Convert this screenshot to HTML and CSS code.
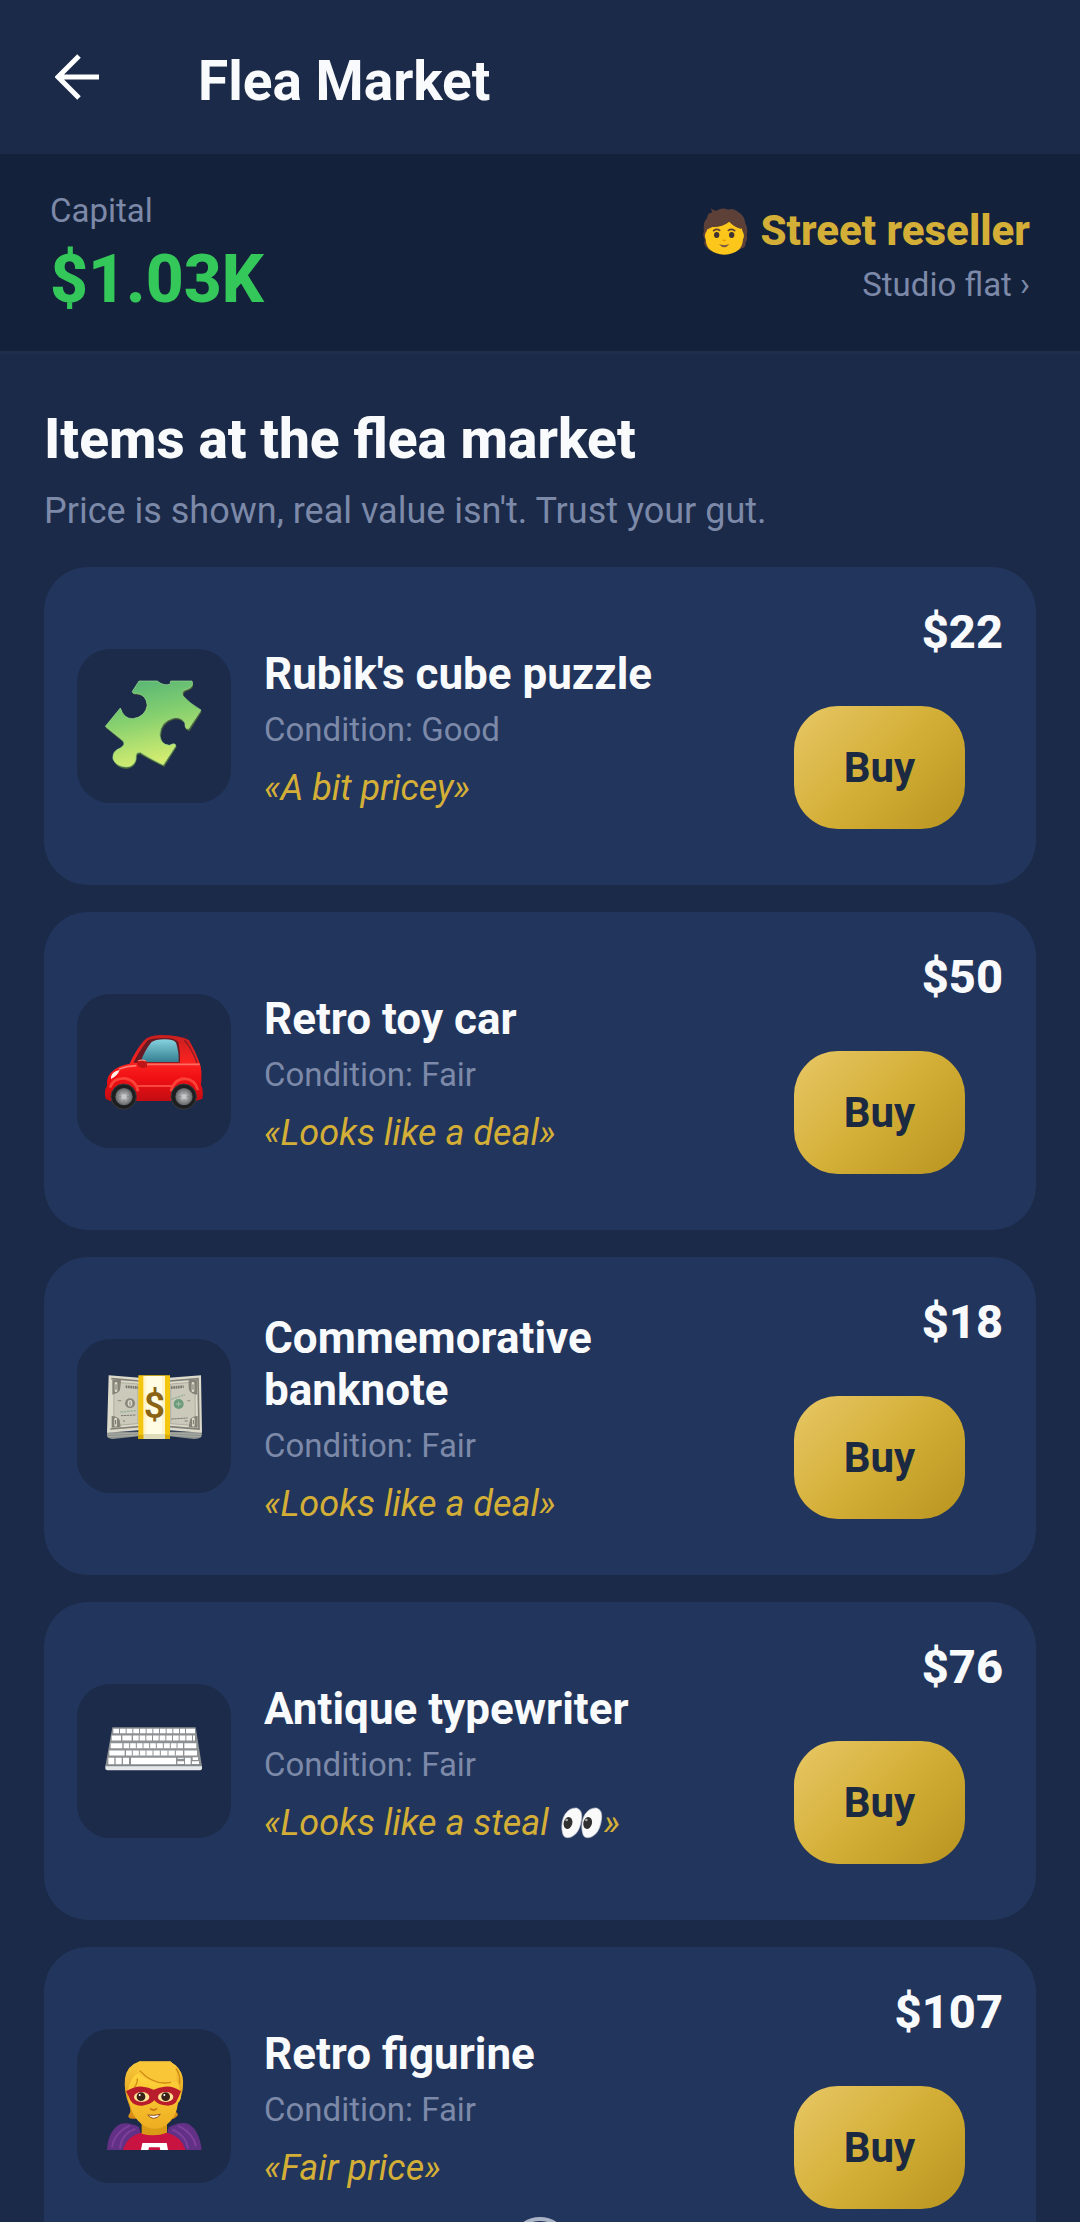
FILE: index.html
```html
<!DOCTYPE html>
<html lang="en">
<head>
    <meta charset="UTF-8">
    <meta name="viewport" content="width=device-width, initial-scale=1.0">
    <title>Flea Market</title>
    <link rel="stylesheet" href="styles.css">
</head>
<body>
    <!-- Top bar -->
    <header class="topbar">
        <button type="button" class="back" aria-label="Back">
            <svg viewBox="0 0 44 46" aria-hidden="true">
                <path d="M44 23H4M24 2L3 23L24 44" fill="none" stroke="#fff" stroke-width="5"/>
            </svg>
        </button>
        <h1>Flea Market</h1>
    </header>

    <!-- Capital and status -->
    <section class="status">
        <div class="capital">
            <p class="label">Capital</p>
            <p class="amount">$1.03K</p>
        </div>
        <div class="rank">
            <p class="rank-name">
                <svg class="avatar" viewBox="66 50 138 144" aria-hidden="true">
                    <path d="M80 172Q68 162 75 149Q66 137 72 122Q68 96 81 84Q82 68 97 66L92 54Q101 62 110 61Q126 49 145 58Q160 52 176 66Q193 76 196 99Q205 114 200 135Q204 149 196 157Q199 170 186 174Q176 182 161 182H104Q87 182 80 172Z" fill="#5d4037"/>
                    <path d="M80 122Q82 111 96 109Q126 106 148 92Q158 106 180 109Q187 114 188 124Q195 135 189 147Q187 191 133 193Q79 191 77 147Q71 135 80 122Z" fill="#fcc61b"/>
                    <path d="M84 116Q79 90 104 84Q140 74 160 90Q181 92 184 116Q159 108 148 94Q127 111 97 110Z" fill="#5d4037"/>
                    <path d="M101 121Q110 114 119 120M145 120Q154 114 164 121" fill="none" stroke="#5d4037" stroke-width="5" stroke-linecap="round"/>
                    <ellipse cx="110" cy="134" rx="8" ry="9" fill="#403335"/>
                    <ellipse cx="155" cy="134" rx="8" ry="9" fill="#403335"/>
                    <path d="M126 149Q133 146 139 149Q133 156 126 149Z" fill="#e59500"/>
                    <path d="M117 162Q132 167 148 162Q133 180 117 162Z" fill="#795548"/>
                </svg>
                Street reseller
            </p>
            <a href="#" class="home-link">Studio flat ›</a>
        </div>
    </section>

    <main class="market">
        <h2>Items at the flea market</h2>
        <p class="hint">Price is shown, real value isn't. Trust your gut.</p>

        <ul class="items">
            <li class="item">
                <svg class="thumb" viewBox="52 54 462 462" aria-hidden="true">
                    <defs>
                        <linearGradient id="green" x1="0" y1="0" x2="0.25" y2="1">
                            <stop offset="0" stop-color="#51b276"/>
                            <stop offset="0.5" stop-color="#86d06f"/>
                            <stop offset="1" stop-color="#d2ec70"/>
                        </linearGradient>
                    </defs>
                    <path d="M238 154H296Q312 170 332 164L334 154H398Q406 170 388 178Q366 184 374 197Q394 221 426 242L390 300Q372 298 377 279Q365 263 345 265Q305 277 304 317Q308 343 331 343Q349 333 351 348L314 408Q268 386 242 370Q230 367 231 386Q226 412 200 414Q170 411 162 389Q160 365 183 356Q199 345 189 332L138 290L184 233Q194 267 219 266Q253 259 261 225Q261 190 230 191Q218 190 220 182Z" fill="#4c6539"/>
                    <path d="M238 150H293Q310 165 331 160L333 150H397Q403 165 386 173Q362 179 369 194Q391 218 424 237L387 293Q375 296 376 276Q365 257 343 260Q301 271 300 312Q302 341 329 343Q348 333 348 345L311 402Q267 381 242 364Q226 363 229 383Q224 408 199 408Q169 406 160 384Q157 360 182 351Q199 341 190 329L137 286L182 231Q192 264 220 263Q258 257 263 223Q260 191 231 187Q217 189 218 181Z" fill="url(#green)" stroke="#9de092" stroke-width="2"/>
                </svg>
                <div class="info">
                    <h3>Rubik's cube puzzle</h3>
                    <p class="condition">Condition: Good</p>
                    <p class="quote">«A bit pricey»</p>
                </div>
                <div class="deal">
                    <p class="price">$22</p>
                    <button type="button" class="buy">Buy</button>
                </div>
            </li>

            <li class="item">
                <svg class="thumb" viewBox="52 42 462 462" aria-hidden="true">
                    <defs>
                        <linearGradient id="red" x1="0" y1="0" x2="0" y2="1">
                            <stop offset="0" stop-color="#c81e1f"/>
                            <stop offset="0.42" stop-color="#fb2320"/>
                            <stop offset="0.65" stop-color="#f01014"/>
                            <stop offset="1" stop-color="#c40d12"/>
                        </linearGradient>
                        <linearGradient id="glass" x1="0" y1="0" x2="0" y2="1">
                            <stop offset="0" stop-color="#87d2df"/>
                            <stop offset="1" stop-color="#347f91"/>
                        </linearGradient>
                        <radialGradient id="hub">
                            <stop offset="0" stop-color="#c8c9ca"/>
                            <stop offset="0.5" stop-color="#999b9c"/>
                            <stop offset="1" stop-color="#5f6264"/>
                        </radialGradient>
                    </defs>
                    <path d="M376 175L381 164" stroke="#5b1a25" stroke-width="3"/>
                    <path d="M138 356Q132 333 142 318Q138 287 164 269Q181 256 210 251Q230 207 254 181Q268 166 302 165Q358 165 388 180Q407 212 421 252Q428 268 424 315Q433 333 428 356L409 363H151Z" fill="url(#red)"/>
                    <path d="M221 248Q247 199 265 181Q279 174 313 174Q348 174 356 187Q363 217 361 248Z" fill="#671a24"/>
                    <path d="M243 246Q253 215 275 187Q286 178 315 178Q341 178 349 188Q358 213 357 246Z" fill="url(#glass)"/>
                    <path d="M374 181Q396 204 412 249" fill="none" stroke="#891d25" stroke-width="4"/>
                    <path d="M260 253H420" stroke="#ff6d61" stroke-width="5"/>
                    <path d="M178 267Q201 258 230 257" fill="none" stroke="#ff7b71" stroke-width="5"/>
                    <path d="M232 318H337" stroke="#ff5a4e" stroke-width="5"/>
                    <path d="M232 242Q253 236 262 246V262Q237 268 233 253Z" fill="#c01517"/>
                    <path d="M236 242Q249 238 259 243" stroke="#ff8076" stroke-width="4" fill="none"/>
                    <path d="M154 297Q153 275 180 270Q174 287 154 297Z" fill="#fff0ec"/>
                    <path d="M151 323Q160 294 194 295Q229 299 235 334M334 334Q343 298 374 296Q406 298 415 330" fill="none" stroke="#fb4239" stroke-width="8"/>
                    <circle cx="192" cy="350" r="38" fill="#1d1e20" stroke="#393c40" stroke-width="3"/>
                    <circle cx="372" cy="350" r="38" fill="#1d1e20" stroke="#393c40" stroke-width="3"/>
                    <circle cx="193" cy="350" r="26" fill="url(#hub)"/>
                    <circle cx="373" cy="350" r="26" fill="url(#hub)"/>
                    <path d="M193 326V374M169 350H217M373 326V374M349 350H397" stroke="#7d7e80" stroke-width="2"/>
                    <circle cx="193" cy="350" r="8" fill="#c5c6c7"/>
                    <circle cx="373" cy="350" r="8" fill="#c5c6c7"/>
                </svg>
                <div class="info">
                    <h3>Retro toy car</h3>
                    <p class="condition">Condition: Fair</p>
                    <p class="quote">«Looks like a deal»</p>
                </div>
                <div class="deal">
                    <p class="price">$50</p>
                    <button type="button" class="buy">Buy</button>
                </div>
            </li>

            <li class="item">
                <svg class="thumb" viewBox="52 26 462 462" aria-hidden="true">
                    <path d="M142 304H426V318Q420 326 403 326L330 318H237L159 326Q140 324 142 313Z" fill="#8f938e"/>
                    <path d="M142 312L237 308M330 308L427 312M145 319L237 314M330 314L424 319" stroke="#b7b9b2" stroke-width="2"/>
                    <path d="M147 135L240 142H328L424 135L427 307L330 300H237L142 307Z" fill="#dcdacb"/>
                    <path d="M155 145L239 152M329 152L415 145L418 296L330 289M237 289L152 296Z" fill="none" stroke="#817f76" stroke-width="5"/>
                    <path d="M163 155L235 161V280L162 286ZM333 161L406 155L407 286L333 280Z" fill="#cbc9b9" stroke="#9e9b8e" stroke-width="2"/>
                    <path d="M158 149H184Q182 176 180 181Q172 191 158 193ZM412 149H387Q386 175 389 181Q397 191 412 193ZM156 292V257Q174 258 180 269L183 291ZM414 292V257Q396 258 391 269L387 291Z" fill="#858277"/>
                    <path d="M169 159V181M400 159V181M168 266V285M401 266V285" stroke="#dcdacb" stroke-width="8" stroke-linecap="round"/>
                    <path d="M169 162V178M400 162V178M168 269V282M401 269V282" stroke="#706d64" stroke-width="3"/>
                    <path d="M198 169L235 172M334 172L372 169" stroke="#77756c" stroke-width="8" stroke-dasharray="5 2"/>
                    <circle cx="211" cy="219" r="15" fill="#88877d"/>
                    <ellipse cx="211" cy="219" rx="7" ry="10" fill="#dddacd"/>
                    <path d="M211 213V226" stroke="#817e74" stroke-width="3"/>
                    <circle cx="357" cy="221" r="15" fill="#6d9c7c"/>
                    <path d="M349 221H365M357 214V228" stroke="#a9c2a5" stroke-width="3"/>
                    <path d="M182 245L230 241M335 207L376 193" stroke="#9bb29b" stroke-width="4" stroke-dasharray="8 2"/>
                    <path d="M184 256L228 254M335 266L384 263" stroke="#777870" stroke-width="3" stroke-dasharray="7 2"/>
                    <path d="M174 211H185M190 272H196M383 211H392M375 272H384" stroke="#99958a" stroke-width="4"/>
                    <path d="M236 135H331V326H236Z" fill="#f5c60f"/>
                    <path d="M251 137H316V311H251Z" fill="#fff4c8"/>
                    <path d="M260 137H307V311H260Z" fill="#fffce3"/>
                    <path d="M251 311H316V326H251Z" fill="#dedbbb"/>
                    <path d="M236 313H251V326H236ZM316 313H331V326H316Z" fill="#d6ab08"/>
                    <text x="284" y="263" class="bill-sign">$</text>
                </svg>
                <div class="info">
                    <h3>Commemorative banknote</h3>
                    <p class="condition">Condition: Fair</p>
                    <p class="quote">«Looks like a deal»</p>
                </div>
                <div class="deal">
                    <p class="price">$18</p>
                    <button type="button" class="buy">Buy</button>
                </div>
            </li>

            <li class="item">
                <svg class="thumb" viewBox="52 44 462 462" aria-hidden="true">
                    <path d="M137 289H427V297Q427 303 418 303H147Q137 303 137 297Z" fill="#e4e8eb"/>
                    <path d="M158 174H408L427 291H137Z" fill="#8d9194"/>
                    <g fill="none" stroke="#fff">
                        <path d="M161 185H376" stroke-width="13" stroke-dasharray="17 3"/>
                        <path d="M379 185H406" stroke-width="13"/>
                        <path d="M156 206H184M188 206H406" stroke-width="15" stroke-dasharray="28 4 17 3 17 3 17 3 17 3 17 3 17 3 17 3 17 3 17 3 17 3 17 3"/>
                        <path d="M153 229H188M192 229H370M374 229H410" stroke-width="15"/>
                        <path d="M149 251H195M199 251H370M374 251H412" stroke-width="15"/>
                        <path d="M146 275H164M168 275H186M190 275H208M214 275H349M376 275H393" stroke-width="19"/>
                        <path d="M353 280H373M397 280H418M399 268H415" stroke-width="8"/>
                        <path d="M354 267H372" stroke-width="3"/>
                    </g>
                    <path d="M210 221V237M230 221V237M250 221V237M270 221V237M290 221V237M311 221V237M332 221V237M352 221V237M218 243V259M239 243V259M259 243V259M280 243V259M302 243V259M325 243V259M347 243V259" stroke="#8d9194" stroke-width="3"/>
                    <path d="M141 288H423" stroke="#777d82" stroke-width="2"/>
                </svg>
                <div class="info">
                    <h3>Antique typewriter</h3>
                    <p class="condition">Condition: Fair</p>
                    <p class="quote">«Looks like a steal <svg class="eyes" viewBox="968 84 132 96" aria-hidden="true">
                        <path d="M974 154Q971 126 983 106Q997 85 1018 87Q1036 93 1033 119Q1029 151 1014 166Q997 181 982 174Q976 169 974 154ZM1034 154Q1031 126 1043 106Q1057 85 1078 87Q1096 93 1093 119Q1089 151 1074 166Q1057 181 1042 174Q1036 169 1034 154Z" fill="#fafafa" stroke="#b9bdc7" stroke-width="2"/>
                        <ellipse cx="992" cy="132" rx="13" ry="18" fill="#303030" transform="rotate(15 992 132)"/>
                        <ellipse cx="1051" cy="132" rx="13" ry="18" fill="#303030" transform="rotate(15 1051 132)"/>
                        <circle cx="988" cy="123" r="4" fill="#aaa"/>
                        <circle cx="1047" cy="123" r="4" fill="#aaa"/>
                    </svg>»</p>
                </div>
                <div class="deal">
                    <p class="price">$76</p>
                    <button type="button" class="buy">Buy</button>
                </div>
            </li>

            <li class="item">
                <svg class="thumb" viewBox="52 60 462 462" aria-hidden="true">
                    <defs>
                        <linearGradient id="hair" x1="0" y1="0" x2="0" y2="1">
                            <stop offset="0" stop-color="#fbcc3c"/>
                            <stop offset="1" stop-color="#d48a12"/>
                        </linearGradient>
                        <linearGradient id="skin" x1="0" y1="0" x2="0" y2="1">
                            <stop offset="0" stop-color="#ffd43c"/>
                            <stop offset="1" stop-color="#edad20"/>
                        </linearGradient>
                    </defs>
                    <path d="M142 423Q145 365 182 345Q205 338 238 354L259 423ZM426 423Q419 361 385 344Q361 337 327 355L310 423Z" fill="#623084"/>
                    <path d="M157 414Q165 370 211 350M181 419Q185 374 227 360M409 412Q401 372 355 350M385 419Q379 378 337 361" fill="none" stroke="#7c3f9b" stroke-width="6"/>
                    <path d="M190 423Q204 379 245 372H324Q365 382 377 423Z" fill="#c91341"/>
                    <path d="M246 340H322V371Q285 385 246 374Z" fill="#d99a16"/>
                    <path d="M237 158H332Q363 174 369 205Q374 235 362 270Q347 291 349 309Q363 318 342 329H221Q202 329 207 318Q217 309 207 284Q192 249 196 208Q202 169 237 158Z" fill="url(#hair)"/>
                    <path d="M205 243Q212 205 235 193Q294 234 349 210Q359 230 363 251Q366 272 355 282Q351 324 320 348Q284 372 246 346Q216 320 211 286Q204 278 205 243Z" fill="url(#skin)"/>
                    <path d="M238 157H333Q354 176 350 218Q282 239 234 190Q228 174 238 157Z" fill="#f9c638"/>
                    <path d="M240 185Q283 231 334 220M224 236Q234 221 233 208M349 179Q363 198 360 224" fill="none" stroke="#ce8910" stroke-width="4"/>
                    <path d="M199 247Q227 230 249 233Q267 235 282 242Q298 235 315 233Q340 230 364 247Q357 266 349 280Q336 293 316 289Q295 288 284 274Q273 287 248 290Q223 292 212 274Q206 259 199 247Z" fill="#b91d2b"/>
                    <ellipse cx="246" cy="264" rx="23" ry="15" fill="#ffe395"/>
                    <ellipse cx="318" cy="264" rx="23" ry="15" fill="#ffe395"/>
                    <circle cx="244" cy="263" r="13" fill="#38221a"/>
                    <circle cx="318" cy="263" r="13" fill="#38221a"/>
                    <circle cx="240" cy="258" r="3" fill="#fff"/>
                    <circle cx="314" cy="258" r="3" fill="#fff"/>
                    <path d="M271 298Q282 308 292 298" fill="none" stroke="#c97718" stroke-width="5"/>
                    <path d="M264 318Q283 321 302 316Q293 329 281 328Q270 326 264 318Z" fill="#fff" stroke="#925126" stroke-width="3"/>
                    <path d="M248 402H321L325 423H302L300 415H268L266 423H244Z" fill="#fff"/>
                </svg>
                <div class="info">
                    <h3>Retro figurine</h3>
                    <p class="condition">Condition: Fair</p>
                    <p class="quote">«Fair price»</p>
                </div>
                <div class="deal">
                    <p class="price">$107</p>
                    <button type="button" class="buy">Buy</button>
                </div>
            </li>
        </ul>
    </main>

    <!-- System navigation peeking in at the bottom edge -->
    <div class="sysnav" aria-hidden="true">
        <span class="sysnav-home"></span>
    </div>
</body>
</html>
```
FILE: styles.css
```css
* {
    box-sizing: border-box;
}

html {
    height: 100%;
    overflow: hidden;
}

body {
    font-family: Roboto, "Liberation Sans", sans-serif;
    background-color: #1b2a48;
    color: #f8fafc;
    margin: 0;
    height: 100%;
    overflow: hidden;
}

h1, h2, h3, p, ul {
    margin: 0;
    padding: 0;
}

button {
    font-family: inherit;
    border: none;
    cursor: pointer;
}

svg {
    display: block;
}

/* Top bar */
.topbar {
    display: flex;
    align-items: center;
    gap: 88px;
    height: 154px;
    padding: 4px 44px 0;
}

.back {
    background: none;
    width: 66px;
    height: 66px;
    padding: 8px 11px 12px;
}

.back svg {
    width: 44px;
    height: 46px;
}

.topbar h1 {
    font-size: 55px;
    font-weight: 700;
    line-height: 66px;
    padding-top: 4px;
}

/* Capital and status */
.status {
    display: flex;
    justify-content: space-between;
    align-items: center;
    background-color: #14213b;
    border-bottom: 3px solid #212e4b;
    padding: 37px 50px 33px;
}

.label,
.home-link,
.condition {
    color: #7c89a8;
    font-size: 33px;
    line-height: 40px;
}

.amount {
    color: #34c759;
    font-size: 66px;
    font-weight: 800;
    line-height: 77px;
    margin-top: 10px;
}

.rank {
    display: flex;
    flex-direction: column;
    align-items: flex-end;
    gap: 8px;
}

.rank-name {
    display: flex;
    align-items: center;
    gap: 12px;
    color: #d4af37;
    font-size: 42px;
    font-weight: 800;
    line-height: 52px;
}

.avatar {
    width: 46px;
    height: 48px;
}

.home-link {
    text-decoration: none;
}

/* Items */
.market {
    padding: 52px 44px;
}

.market h2 {
    font-size: 55px;
    font-weight: 800;
    line-height: 66px;
}

.hint {
    color: #7c89a8;
    font-size: 36px;
    line-height: 42px;
    margin: 18px 0 35px;
}

.items {
    display: flex;
    flex-direction: column;
    gap: 27px;
    list-style: none;
}

.item {
    display: flex;
    align-items: center;
    gap: 33px;
    min-height: 318px;
    padding: 33px;
    background-color: #22355c;
    border-radius: 44px;
}

.thumb {
    flex: none;
    width: 154px;
    height: 154px;
    background-color: #1c2b4a;
    border-radius: 33px;
}

.bill-sign {
    font-family: Roboto, sans-serif;
    font-size: 112px;
    font-weight: 600;
    fill: #8a6414;
    text-anchor: middle;
}

.info {
    flex: 1;
    padding-top: 4px;
}

.info h3 {
    font-size: 44px;
    font-weight: 700;
    line-height: 52px;
}

.condition {
    margin-top: 10px;
}

.quote {
    color: #d4af37;
    font-size: 36px;
    font-style: italic;
    line-height: 42px;
    margin-top: 17px;
}

.eyes {
    display: inline-block;
    width: 44px;
    height: 32px;
    margin-left: 2px;
    vertical-align: -4px;
}

.deal {
    display: flex;
    flex-direction: column;
    align-items: flex-end;
    align-self: flex-start;
    gap: 42px;
    width: 209px;
}

.price {
    font-size: 47px;
    font-weight: 800;
    line-height: 64px;
}

.buy {
    width: 171px;
    height: 123px;
    margin-right: 38px;
    border-radius: 44px;
    background: linear-gradient(135deg, #e8c766, #d4af37 50%, #b8941f);
    color: #1b2a41;
    font-size: 42px;
    font-weight: 700;
}

/* System navigation */
.sysnav {
    position: fixed;
    left: 0;
    right: 0;
    bottom: 0;
    height: 5px;
    overflow: hidden;
    display: flex;
    justify-content: center;
}

.sysnav-home {
    flex: none;
    width: 60px;
    height: 60px;
    border: 4px solid #aab2c5;
    border-radius: 50%;
}
```
